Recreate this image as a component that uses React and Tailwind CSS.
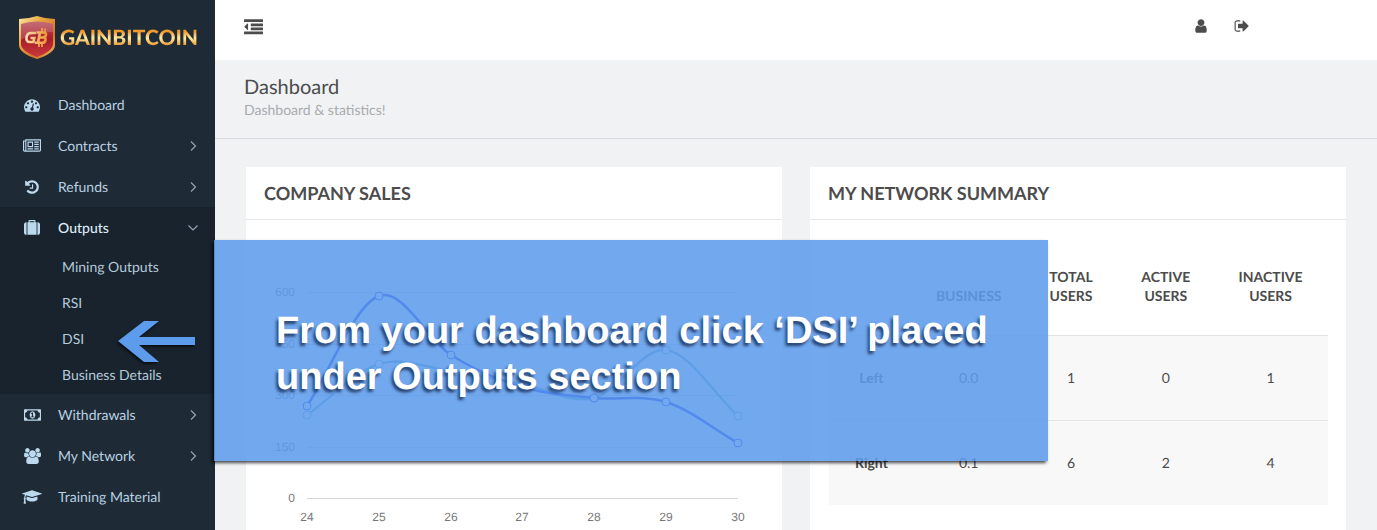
import React from "react";

const ICONS = {
  dashboard: {
    box: "0 0 1792 1792",
    d: "M384 1152q0-53-37.5-90.5t-90.5-37.5-90.5 37.5-37.5 90.5 37.5 90.5 90.5 37.5 90.5-37.5 37.5-90.5zm192-448q0-53-37.5-90.5t-90.5-37.5-90.5 37.5-37.5 90.5 37.5 90.5 90.5 37.5 90.5-37.5 37.5-90.5zm428 481l101-382q6-26-7.5-48.5t-38.5-29.5-48 6.500-30 39.500l-101 382q-60 5-107 43.500t-63 98.500q-20 77 20 146t117 89 146-20 89-117q16-60-6-117t-72-91zm660-33q0-53-37.5-90.5t-90.5-37.5-90.5 37.5-37.5 90.5 37.5 90.5 90.5 37.5 90.5-37.5 37.5-90.5zm-640-640q0-53-37.5-90.5t-90.5-37.5-90.5 37.5-37.5 90.5 37.5 90.5 90.5 37.5 90.5-37.5 37.5-90.5zm448 192q0-53-37.5-90.5t-90.5-37.5-90.5 37.5-37.5 90.5 37.5 90.5 90.5 37.5 90.5-37.5 37.5-90.5zm320 448q0 261-141 483-19 29-54 29h-1402q-35 0-54-29-141-221-141-483 0-182 71-348t191-286 286-191 348-71 348 71 286 191 191 286 71 348z",
  },
  newspaper: {
    box: "0 0 2048 1792",
    d: "M1024 512h-384v384h384v-384zm128 640v128h-640v-128h640zm0-768v640h-640v-640h640zm640 768v128h-512v-128h512zm0-256v128h-512v-128h512zm0-256v128h-512v-128h512zm0-256v128h-512v-128h512zm-1536 960v-960h-128v960q0 26 19 45t45 19 45-19 19-45zm1664 0v-1088h-1536v1088q0 33-11 64h1483q26 0 45-19t19-45zm128-1216v1216q0 80-56 136t-136 56h-1664q-80 0-136-56t-56-136v-1088h256v-128h1792z",
  },
  history: {
    box: "0 0 1792 1792",
    d: "M1664 896q0 156-61 298t-164 245-245 164-298 61q-172 0-327-72.5t-264-204.5q-7-10-6.5-22.5t8.5-20.5l137-138q10-9 25-9 16 2 23 12 73 95 179 147t225 52q104 0 198.5-40.5t163.5-109.5 109.5-163.5 40.5-198.5-40.5-198.5-109.5-163.5-163.5-109.5-198.5-40.5q-98 0-188 35.5t-160 101.5l137 138q31 30 14 69-17 40-59 40h-448q-26 0-45-19t-19-45v-448q0-42 40-59 39-17 69 14l130 129q107-101 244.5-156.5t284.5-55.5q156 0 298 61t245 164 164 245 61 298zm-640-288v448q0 14-9 23t-23 9h-320q-14 0-23-9t-9-23v-64q0-14 9-23t23-9h224v-352q0-14 9-23t23-9h64q14 0 23 9t9 23z",
  },
  suitcase: {
    box: "0 0 1792 1792",
    d: "M640 256h512v-128h-512v128zm-352 0v1408h-64q-92 0-158-66t-66-158v-960q0-92 66-158t158-66h64zm1120 0v1408h-1024v-1408h128v-160q0-40 28-68t68-28h576q40 0 68 28t28 68v160h128zm384 224v960q0 92-66 158t-158 66h-64v-1408h64q92 0 158 66t66 158z",
  },
  money: {
    box: "0 0 1920 1792",
    d: "M768 1152h384v-96h-128v-448h-114l-148 137 77 80q42-37 55-57h2v288h-128v96zm512-256q0 70-21 142t-59.5 134-101.5 101-138 39-138-39-101.5-101-59.5-134-21-142 21-142 59.5-134 101.5-101 138-39 138 39 101.5 101 59.5 134 21 142zm512 256v-512q-106 0-181-75t-75-181h-1152q0 106-75 181t-181 75v512q106 0 181 75t75 181h1152q0-106 75-181t181-75zm128-832v1152q0 26-19 45t-45 19h-1792q-26 0-45-19t-19-45v-1152q0-26 19-45t45-19h1792q26 0 45 19t19 45z",
  },
  users: {
    box: "0 0 1920 1792",
    d: "M593 896q-162 5-265 128h-134q-82 0-138-40.5t-56-118.5q0-353 124-353 6 0 43.5 21t97.5 42.5 119 21.5q67 0 133-23-5 37-5 66 0 159 93 293zm1071 637q0 120-73 189.5t-194 69.5h-874q-121 0-194-69.5t-73-189.5q0-53 3.5-103.5t14-109 26.5-108.5 43-97.5 62-81 85.5-53.5 111.5-20q10 0 43 21.5t73 48 107 48 135 21.5 135-21.5 107-48 73-48 43-21.5q61 0 111.5 20t85.5 53.5 62 81 43 97.5 26.5 108.5 14 109 3.5 103.5zm-1024-1277q0 106-75 181t-181 75-181-75-75-181 75-181 181-75 181 75 75 181zm704 384q0 159-112.5 271.5t-271.5 112.5-271.5-112.5-112.5-271.5 112.5-271.5 271.5-112.5 271.5 112.5 112.5 271.5zm576 225q0 78-56 118.5t-138 40.5h-134q-103-123-265-128 93-134 93-293 0-29-5-66 66 23 133 23 59 0 119-21.5t97.5-42.5 43.5-21q124 0 124 353zm-128-609q0 106-75 181t-181 75-181-75-75-181 75-181 181-75 181 75 75 181z",
  },
  graduation: {
    box: "0 0 2304 1792",
    d: "M1774 836l18 316q4 69-82 128t-235 93.5-323 34.5-323-34.5-235-93.5-82-128l18-316 574 181q22 7 48 7t48-7zm530-324q0 23-22 31l-1120 352q-4 1-10 1t-10-1l-652-206q-43 34-71 111.5t-34 178.5q63 36 63 109 0 69-58 107l58 433q2 14-8 25-9 11-24 11h-192q-15 0-24-11-10-11-8-25l58-433q-58-38-58-107 0-73 65-111 11-207 98-330l-333-104q-22-8-22-31t22-31l1120-352q4-1 10-1t10 1l1120 352q22 8 22 31z",
  },
  dedent: {
    box: "0 0 1792 1792",
    d: "M384 544v576q0 13-9.5 22.5t-22.5 9.5q-14 0-23-9l-288-288q-9-9-9-23t9-23l288-288q9-9 23-9 13 0 22.5 9.5t9.5 22.5zm1408 768v192q0 13-9.5 22.5t-22.5 9.5h-1728q-13 0-22.5-9.5t-9.5-22.5v-192q0-13 9.5-22.5t22.5-9.5h1728q13 0 22.5 9.5t9.5 22.5zm0-384v192q0 13-9.5 22.5t-22.5 9.5h-1088q-13 0-22.5-9.5t-9.5-22.5v-192q0-13 9.5-22.5t22.5-9.5h1088q13 0 22.5 9.5t9.5 22.5zm0-384v192q0 13-9.5 22.5t-22.5 9.5h-1088q-13 0-22.5-9.5t-9.5-22.5v-192q0-13 9.5-22.5t22.5-9.5h1088q13 0 22.5 9.5t9.5 22.5zm0-384v192q0 13-9.5 22.5t-22.5 9.5h-1728q-13 0-22.5-9.5t-9.5-22.5v-192q0-13 9.5-22.5t22.5-9.5h1728q13 0 22.5 9.5t9.5 22.5z",
  },
  user: {
    box: "0 0 1792 1792",
    d: "M1536 1399q0 109-62.5 187t-150.5 78h-854q-88 0-150.5-78t-62.5-187q0-85 8.5-160.5t31.5-152 58.5-131 94-89 134.5-34.5q131 128 313 128t313-128q76 0 134.5 34.5t94 89 58.5 131 31.5 152 8.5 160.5zm-256-887q0 159-112.5 271.5t-271.5 112.5-271.5-112.5-112.5-271.5 112.5-271.5 271.5-112.5 271.5 112.5 112.5 271.5z",
  },
  signOut: {
    box: "0 0 1792 1792",
    d: "M704 1440q0 4 1 20t.5 26.5-3 23.5-10 19.5-20.5 6.5h-320q-119 0-203.500-84.500t-84.500-203.500v-704q0-119 84.500-203.500t203.500-84.500h320q13 0 22.500 9.500t9.500 22.500q0 4 1 20t.5 26.500-3 23.500-10 19.500-20.500 6.500h-320q-66 0-113 47t-47 113v704q0 66 47 113t113 47h312l11.500 1 11.500 3 8 5.500 7 9 2 13.500zm928-544q0 26-19 45l-544 544q-19 19-45 19t-45-19-19-45v-288h-448q-26 0-45-19t-19-45v-384q0-26 19-45t45-19h448v-288q0-26 19-45t45-19 45 19l544 544q19 19 19 45z",
  },
};

function Icon({ name, className }) {
  const { box, d } = ICONS[name];
  return (
    <svg viewBox={box} className={className} fill="currentColor" aria-hidden="true">
      <path d={d} />
    </svg>
  );
}

function Chevron({ open }) {
  return (
    <svg viewBox="0 0 12 12" className="size-3 text-[#93a5b3]" fill="none" stroke="currentColor" strokeWidth="1.2" aria-hidden="true">
      <path d={open ? "M1.500 3.500 6 8l4.500-4.500" : "M4 1.500 8.500 6 4 10.500"} />
    </svg>
  );
}

function Logo() {
  return (
    <a href="#home" className="flex h-[75px] items-center gap-1 pl-[18px]">
      <svg viewBox="0 0 38 45" className="h-[45px] w-[38px] shrink-0" aria-hidden="true">
        <defs>
          <linearGradient id="rim" x1="0" y1="0" x2="1" y2="1">
            <stop offset="0" stopColor="#fbe9a6" />
            <stop offset=".35" stopColor="#e9a63c" />
            <stop offset=".7" stopColor="#d2742a" />
            <stop offset="1" stopColor="#f6cf72" />
          </linearGradient>
          <linearGradient id="face" x1="0" y1="0" x2="0" y2="1">
            <stop offset="0" stopColor="#b9505a" />
            <stop offset=".5" stopColor="#a81c2c" />
            <stop offset="1" stopColor="#c93a3a" />
          </linearGradient>
          <linearGradient id="coin" gradientUnits="userSpaceOnUse" x1="8" y1="0" x2="30" y2="0">
            <stop offset="0" stopColor="#f8dcae" />
            <stop offset="1" stopColor="#f2932f" />
          </linearGradient>
        </defs>
        <path d="M1 4Q10 4 19 1q9 3 18 3v26q0 8-18 14Q1 38 1 30z" fill="url(#rim)" />
        <path d="M3 9Q19 4 35 9v20q0 7-16 13Q3 36 3 29z" fill="url(#face)" />
        <path d="M3 9Q19 4 35 9v8Q16 16 3 25z" fill="#fff" opacity=".16" />
        <g fill="none" stroke="url(#coin)" strokeWidth="2.600">
          <path d="M18 18h-5q-4 0-4.500 4.500T12 27h3.500l.8-4H12.500" />
          <path d="M18.500 17.500h7q3 0 2.500 2.500t-3.500 2.500h-4 4.500q3 0 2.500 2.700t-3.500 2.600h-7M22 17.500l-2 10" />
          <path d="M24 13v4M27 13.500v4M21 28v4M24 28v4" strokeWidth="1.600" />
        </g>
      </svg>
      <span className="bg-gradient-to-b from-[#f09a2c] from-25% via-[#ffeb9e] via-50% to-[#ec9a30] to-80% bg-clip-text font-['Lato'] text-[21px] leading-6 font-black text-transparent">
        GAINBITCOIN
      </span>
    </a>
  );
}

function NavItem({ icon, iconClass, label, expandable, open }) {
  return (
    <a
      href={"#" + label.toLowerCase().replace(" ", "-")}
      className={
        "flex h-[41px] items-center pr-4 pl-5 text-sm " + (open ? "font-medium text-[#dcebf7]" : "text-[#b9d0e2]")
      }
    >
      <span className="flex w-[38px] pr-[14px]">
        <span className="flex flex-1 justify-center text-[#bcd9ee]">
          <Icon name={icon} className={"shrink-0 " + iconClass} />
        </span>
      </span>
      <span className="flex-1">{label}</span>
      {expandable && <Chevron open={open} />}
    </a>
  );
}

const OUTPUTS = ["Mining Outputs", "RSI", "DSI", "Business Details"];

function Sidebar() {
  return (
    <aside className="w-[215px] shrink-0 bg-[#1e2b36]">
      <Logo />
      <nav aria-label="Main" className="pt-[9px]">
        <NavItem icon="dashboard" iconClass="size-4" label="Dashboard" />
        <NavItem icon="newspaper" iconClass="h-4 w-[18px]" label="Contracts" expandable />
        <NavItem icon="history" iconClass="size-4" label="Refunds" expandable />
        <div className="bg-[#19232d] pb-px">
          <NavItem icon="suitcase" iconClass="size-4" label="Outputs" expandable open />
          <ul className="pt-px">
            {OUTPUTS.map((label) => (
              <li key={label} className="relative flex h-9 items-center pl-[62px] text-sm text-[#b4cadb]">
                <a href={"#" + label.toLowerCase().replace(" ", "-")}>{label}</a>
                {label === "DSI" && (
                  <svg
                    viewBox="0 0 78 42"
                    className="absolute top-0 left-[118px] h-[42px] w-[78px] drop-shadow-[-1px_2px_1px_rgba(0,0,0,0.600)]"
                    aria-hidden="true"
                  >
                    <path d="M0 20 26 0h15L21 16h56v8H21l20 17H26z" fill="#5d9bec" />
                  </svg>
                )}
              </li>
            ))}
          </ul>
        </div>
        <NavItem icon="money" iconClass="h-4 w-[17px]" label="Withdrawals" expandable />
        <NavItem icon="users" iconClass="h-4 w-[17px]" label="My Network" expandable />
        <NavItem icon="graduation" iconClass="h-4 w-5" label="Training Material" />
      </nav>
    </aside>
  );
}

const X = [61, 133, 205, 276, 348, 420, 492];
const CURRENT = [186, 76, 135, 167, 178, 182, 223];
const PREVIOUS = [195, 144, 151, 164, 178, 130, 196];
const DAYS = [24, 25, 26, 27, 28, 29, 30];
const TICKS = [
  [600, 72],
  [450, 124],
  [300, 175],
  [150, 227],
  [0, 278],
];

function smooth(ys) {
  const slope = ys.map((y, i) => {
    const a = Math.max(0, i - 1);
    const b = Math.min(ys.length - 1, i + 1);
    return (ys[b] - ys[a]) / (X[b] - X[a]);
  });
  let d = `M${X[0]} ${ys[0]}`;
  for (let i = 1; i < ys.length; i++) {
    const h = (X[i] - X[i - 1]) / 3;
    d += `C${X[i - 1] + h} ${ys[i - 1] + h * slope[i - 1]} ${X[i] - h} ${ys[i] - h * slope[i]} ${X[i]} ${ys[i]}`;
  }
  return d;
}

function Series({ ys, color }) {
  return (
    <g stroke={color} fill="none">
      <path d={smooth(ys)} strokeWidth="2.500" />
      {ys.map((y, i) => (
        <circle key={i} cx={X[i]} cy={y} r="4" fill="#fff" strokeWidth="1" />
      ))}
    </g>
  );
}

function SalesChart() {
  return (
    <svg viewBox="0 0 536 310" className="block h-auto w-full font-['Liberation_Sans',sans-serif] text-xs" role="img" aria-label="Company sales by day">
      {TICKS.map(([value, y]) => (
        <g key={value}>
          <path d={`M61 ${y + 0.5}H492`} stroke="#d9d9d9" />
          <text x="49" y={y + 4} textAnchor="end" fill="#777">
            {value}
          </text>
        </g>
      ))}
      {DAYS.map((day, i) => (
        <text key={day} x={X[i]} y="301" textAnchor="middle" fill="#777">
          {day}
        </text>
      ))}
      <Series ys={PREVIOUS} color="#62b4c4" />
      <Series ys={CURRENT} color="#0a18e6" />
    </svg>
  );
}

function Card({ title, children }) {
  return (
    <section className="min-w-0 bg-white">
      <h2 className="border-b border-[#e6e7e9] px-[18px] pt-[14px] pb-[14px] text-lg leading-6 font-bold text-[#4c4c4c]">{title}</h2>
      {children}
    </section>
  );
}

const ROWS = [
  ["Left", "0.0", 1, 0, 1],
  ["Right", "0.1", 6, 2, 4],
];

function NetworkTable() {
  return (
    <div className="pt-5 pr-[18px] pl-[19px]">
      <table className="w-full table-fixed text-center text-sm leading-[19px] text-[#4c4c4c]">
        <thead>
          <tr className="h-[95px] align-bottom font-bold">
            <td className="w-[17%]" />
            <th scope="col" className="w-[22%] px-5 pb-[30px]">BUSINESS</th>
            <th scope="col" className="w-[19%] px-5 pb-[30px]">TOTAL USERS</th>
            <th scope="col" className="w-[19%] px-5 pb-[30px]">ACTIVE USERS</th>
            <th scope="col" className="w-[23%] px-5 pb-[30px]">INACTIVE USERS</th>
          </tr>
        </thead>
        <tbody>
          {ROWS.map(([side, ...cells]) => (
            <tr key={side} className="h-[85px] border-t border-[#e2e3e4] bg-[#f8f8f8]">
              <th scope="row" className="font-bold">{side}</th>
              {cells.map((value, i) => (
                <td key={i}>{value}</td>
              ))}
            </tr>
          ))}
        </tbody>
      </table>
    </div>
  );
}

export default function App() {
  return (
    <div className="relative flex min-h-screen font-['Lato',sans-serif] [text-rendering:geometricPrecision]">
      <Sidebar />
      <div className="flex min-w-0 flex-1 flex-col bg-[#f0f2f4]">
        <header className="flex h-[60px] items-start justify-between bg-white pt-[18px] pr-[127px] pl-[29px] text-[#4c4c4c]">
          <button type="button" aria-label="Toggle menu" className="cursor-pointer">
            <Icon name="dedent" className="size-[19px]" />
          </button>
          <div className="flex gap-[25px]">
            <button type="button" aria-label="Profile" className="cursor-pointer">
              <Icon name="user" className="size-4" />
            </button>
            <button type="button" aria-label="Sign out" className="cursor-pointer">
              <Icon name="signOut" className="size-4" />
            </button>
          </div>
        </header>
        <div className="border-b border-[#d9dbde] px-[29px] pt-[15px] pb-[18px]">
          <h1 className="text-xl leading-6 text-[#4c4c4c]">Dashboard</h1>
          <p className="mt-px text-sm leading-5 text-[#a9abad]">Dashboard &amp; statistics!</p>
        </div>
        <main className="grid flex-1 grid-cols-2 gap-7 px-[31px] pt-7">
          <Card title="COMPANY SALES">
            <SalesChart />
          </Card>
          <Card title="MY NETWORK SUMMARY">
            <NetworkTable />
          </Card>
        </main>
      </div>
      <div
        role="note"
        className="absolute top-[240px] left-[214px] w-[834px] bg-[#5d9bec]/87 pt-[68px] pr-10 pb-[61px] pl-[62px] font-['Liberation_Sans',sans-serif] text-[38px] leading-[46px] font-bold text-white shadow-[-2px_2px_3px_rgba(0,0,0,0.700)] [text-shadow:-2px_3px_3px_rgba(20,40,80,0.800)]"
      >
        From your dashboard click ‘DSI’ placed
        <br />
        under Outputs section
      </div>
    </div>
  );
}
